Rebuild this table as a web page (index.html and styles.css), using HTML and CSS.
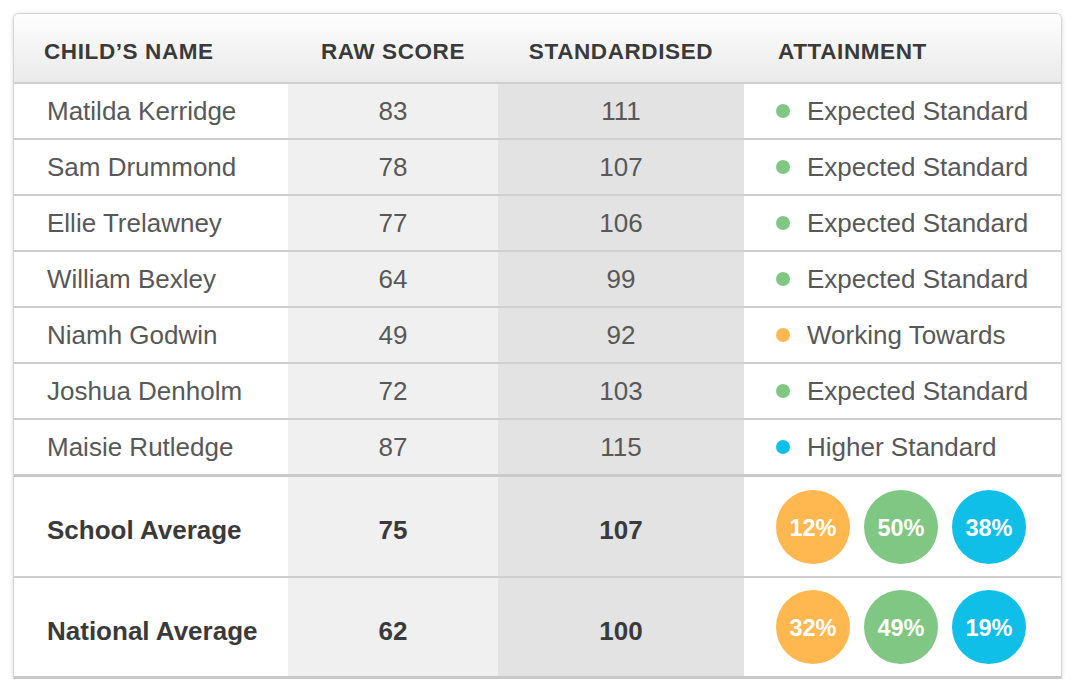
FILE: index.html
```html
<!DOCTYPE html>
<html>
<head>
<meta charset="utf-8">
<link rel="stylesheet" href="styles.css">
</head>
<body>
<div class="card">
  <div class="row head">
    <div class="c name">CHILD’S NAME</div>
    <div class="c num">RAW SCORE</div>
    <div class="c num">STANDARDISED</div>
    <div class="c att">ATTAINMENT</div>
  </div>
  <div class="row">
    <div class="c name">Matilda Kerridge</div>
    <div class="c num raw">83</div>
    <div class="c num std">111</div>
    <div class="c att"><span class="dot green"></span>Expected Standard</div>
  </div>
  <div class="row">
    <div class="c name">Sam Drummond</div>
    <div class="c num raw">78</div>
    <div class="c num std">107</div>
    <div class="c att"><span class="dot green"></span>Expected Standard</div>
  </div>
  <div class="row">
    <div class="c name">Ellie Trelawney</div>
    <div class="c num raw">77</div>
    <div class="c num std">106</div>
    <div class="c att"><span class="dot green"></span>Expected Standard</div>
  </div>
  <div class="row">
    <div class="c name">William Bexley</div>
    <div class="c num raw">64</div>
    <div class="c num std">99</div>
    <div class="c att"><span class="dot green"></span>Expected Standard</div>
  </div>
  <div class="row">
    <div class="c name">Niamh Godwin</div>
    <div class="c num raw">49</div>
    <div class="c num std">92</div>
    <div class="c att"><span class="dot orange"></span>Working Towards</div>
  </div>
  <div class="row">
    <div class="c name">Joshua Denholm</div>
    <div class="c num raw">72</div>
    <div class="c num std">103</div>
    <div class="c att"><span class="dot green"></span>Expected Standard</div>
  </div>
  <div class="row last">
    <div class="c name">Maisie Rutledge</div>
    <div class="c num raw">87</div>
    <div class="c num std">115</div>
    <div class="c att"><span class="dot blue"></span>Higher Standard</div>
  </div>
  <div class="row avg school">
    <div class="c name">School Average</div>
    <div class="c num raw">75</div>
    <div class="c num std">107</div>
    <div class="c att">
      <span class="bubble orange">12%</span>
      <span class="bubble green">50%</span>
      <span class="bubble blue">38%</span>
    </div>
  </div>
  <div class="row avg national">
    <div class="c name">National Average</div>
    <div class="c num raw">62</div>
    <div class="c num std">100</div>
    <div class="c att">
      <span class="bubble orange">32%</span>
      <span class="bubble green">49%</span>
      <span class="bubble blue">19%</span>
    </div>
  </div>
</div>
</body>
</html>
```

FILE: styles.css
```css
html, body {
  margin: 0;
  padding: 0;
  background: #ffffff;
}

body {
  padding: 13px 0 0 13px;
  font-family: "Liberation Sans", Arial, Helvetica, sans-serif;
}

.card {
  width: 1047px;
  border: 1px solid #d4d4d4;
  border-bottom: none;
  border-radius: 6px 6px 0 0;
  box-shadow: 0 1px 5px rgba(0, 0, 0, 0.14);
  background: #fff;
  overflow: hidden;
}

.row {
  display: grid;
  grid-template-columns: 274px 210px 246px 1fr;
  height: 54px;
  border-bottom: 2px solid #cfcfcf;
  font-size: 26px;
  color: #585858;
}

.row.last {
  border-bottom: 3px solid #c9c9c9;
}

.c {
  display: flex;
  align-items: center;
}

.name {
  padding-left: 33px;
}

.num {
  justify-content: center;
}

.att {
  padding-left: 32px;
}

.raw {
  background: #f0f0f0;
}

.std {
  background: #e3e3e3;
}

.head {
  height: 68px;
  background: linear-gradient(#fefefe, #eaeaea);
  font-size: 22.5px;
  letter-spacing: 0.6px;
  font-weight: bold;
  color: #3a3a3a;
}

.head .c {
  padding-top: 8px;
}

.head .name {
  padding-left: 30px;
}

.head .att {
  padding-left: 34px;
}

.dot {
  width: 14px;
  height: 14px;
  border-radius: 50%;
  margin-right: 17px;
  flex: none;
}

.green { background: #7fc783; }
.orange { background: #ffb74f; }
.blue { background: #10bfe8; }

.avg {
  font-weight: bold;
  color: #3a3a3a;
}

.avg .name,
.avg .num {
  padding-top: 8px;
}

.avg.school {
  height: 99px;
}

.avg.national {
  height: 98px;
  border-bottom: 3px solid #c9c9c9;
}

.bubble {
  width: 74px;
  height: 74px;
  box-sizing: border-box;
  padding-top: 3px;
  border-radius: 50%;
  display: flex;
  align-items: center;
  justify-content: center;
  color: #fff;
  font-size: 23.5px;
  font-weight: bold;
  margin-right: 14px;
  flex: none;
}
```
